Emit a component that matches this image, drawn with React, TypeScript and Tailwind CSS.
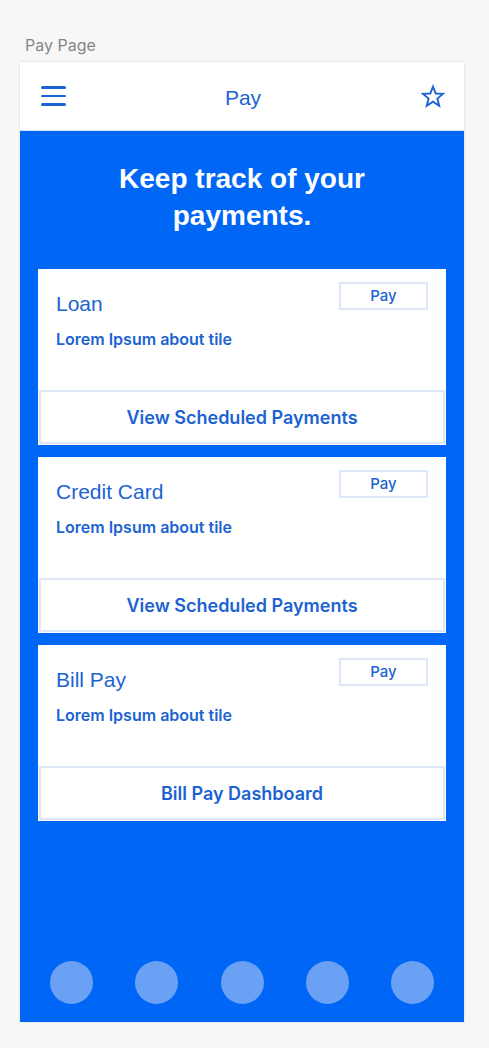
import React from "react";

const tiles = [
  { title: "Loan", action: "View Scheduled Payments" },
  { title: "Credit Card", action: "View Scheduled Payments" },
  { title: "Bill Pay", action: "Bill Pay Dashboard" },
];

const StarIcon = () => (
  <svg width="26" height="25" viewBox="0 0 24 24" fill="none" stroke="#1c63d2" strokeWidth="1.8" strokeLinejoin="miter">
    <path d="M12 2.5l2.6 6.6 7 .4-5.4 4.5 1.8 6.9L12 17l-6 3.9 1.8-6.9-5.4-4.5 7-.4z" />
  </svg>
);

export default function App() {
  return (
    <div className="min-h-[1048px] w-full bg-[#f7f7f7] pt-[35px] font-['Liberation_Sans',Arial,sans-serif]">
      <div className="pl-[25px] font-['Inter',sans-serif] text-[16px] leading-[20px] text-[#858585]">Pay Page</div>

      <div className="ml-[20px] mt-[7px] flex h-[960px] w-[444px] flex-col shadow-[0_0_2px_rgba(0,0,0,0.15)]">
        {/* header */}
        <div className="flex h-[69px] items-center justify-between border-b border-[#d5e3f5] bg-white pl-[21px] pr-[18px]">
          <div className="flex w-[25px] flex-col gap-[6px]">
            <span className="h-[2.5px] w-full rounded bg-[#1c63d2]" />
            <span className="h-[2.5px] w-full rounded bg-[#1c63d2]" />
            <span className="h-[2.5px] w-full rounded bg-[#1c63d2]" />
          </div>
          <div className="pt-[3px] text-[21px] text-[#1c63d2]">Pay</div>
          <StarIcon />
        </div>

        {/* body */}
        <div className="flex flex-1 flex-col bg-[#0066f5] px-[18px]">
          <h1 className="mx-auto mt-[29px] w-[300px] text-center text-[28px] font-bold leading-[37px] text-white">
            Keep track of your payments.
          </h1>

          <div className="mt-[35px] flex flex-col gap-[12px]">
            {tiles.map((tile) => (
              <div key={tile.title} className="flex h-[176px] flex-col bg-white">
                <div className="flex h-[121px] items-start justify-between pl-[18px] pr-[18px] pt-[13px]">
                  <div className="pt-[10px]">
                    <div className="text-[21px] leading-[24px] text-[#1c63d2]">{tile.title}</div>
                    <div className="mt-[14px] font-['Inter',sans-serif] text-[16px] font-semibold leading-[18px] text-[#1c63d2]">
                      Lorem Ipsum about tile
                    </div>
                  </div>
                  <button className="flex h-[28px] w-[89px] items-center justify-center border-2 border-[#dce8f7] font-['Inter',sans-serif] text-[15px] font-medium text-[#1c63d2]">
                    Pay
                  </button>
                </div>
                <div className="mx-px mb-px flex flex-1 items-center justify-center border-2 border-[#dce8f7] font-['Inter',sans-serif] text-[18px] font-semibold text-[#1c63d2]">
                  {tile.action}
                </div>
              </div>
            ))}
          </div>

          <div className="mt-auto mb-[18px] flex justify-between px-[12px]">
            {[0, 1, 2, 3, 4].map((i) => (
              <span key={i} className="h-[43px] w-[43px] rounded-full bg-[#6aa1f5]" />
            ))}
          </div>
        </div>
      </div>
    </div>
  );
}
